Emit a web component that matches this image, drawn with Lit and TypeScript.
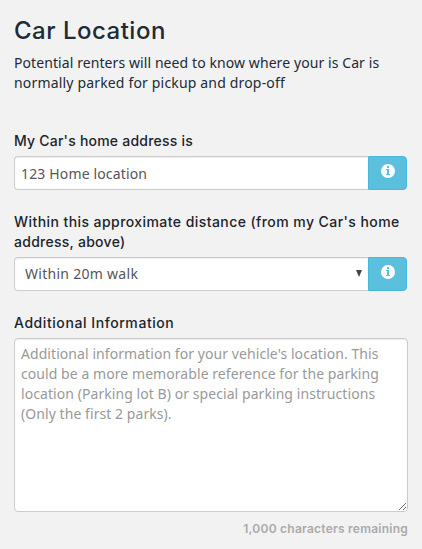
import { LitElement, html, css } from "lit";
import { customElement, state } from "lit/decorators.js";

@customElement("info-button")
class InfoButton extends LitElement {
  static styles = css`
    :host { display: block; flex: none; width: 39px; height: 34px; }
    button {
      display: flex; box-sizing: border-box; width: 100%; height: 100%;
      justify-content: center; align-items: flex-start; padding: 7px 0 0;
      border: 1px solid #46b8da; border-radius: 0 4px 4px 0;
      background: #5bc0de; cursor: pointer;
    }
    svg { display: block; }
  `;
  render() {
    return html`<button type="button" aria-label="More information">
      <svg width="14" height="14" viewBox="0 0 14 14">
        <circle cx="7" cy="7" r="7" fill="#fff"></circle>
        <path d="M6 2h2v2H6zM5 5h3v5h1v1H5v-1h1V6H5z" fill="#5bc0de"></path>
      </svg>
    </button>`;
  }
}

@customElement("app-root")
class AppRoot extends LitElement {
  @state() private remaining = "1,000";

  static styles = css`
    :host {
      display: flex; flex-direction: column; box-sizing: border-box;
      width: 422px; height: 549px; padding: 17px 14px 0; overflow: hidden;
      background: #f2f2f2; color: #212b35;
      font: 14px/20px "Noto Sans", sans-serif;
    }
    .line { display: block; white-space: nowrap; }
    h1 { margin: 0; font: 450 24px/28px Inter, sans-serif; letter-spacing: 0.5px; }
    .intro { margin: 8px 0 0; height: 40px; }
    .i1 { letter-spacing: 0.085px; }
    .i2 { letter-spacing: 0.17px; }
    label { display: block; font: 450 14px/20px Inter, sans-serif; color: #1c242c; }
    .l1 { letter-spacing: 0.22px; }
    .l2 { letter-spacing: 0.43px; }
    .l3 { letter-spacing: 0.27px; }
    .l4 { letter-spacing: 0.57px; }
    .address { margin-top: 38px; }
    .distance { margin-top: 22px; }
    .extra { margin-top: 22px; }
    .group { display: flex; width: 393px; height: 34px; margin-top: 5px; }
    .box {
      box-sizing: border-box; margin: 0; border: 1px solid #ccc; background: #fff;
      color: #555; font: 14px/20px "Noto Sans", sans-serif; outline: none;
      box-shadow: inset 0 1px 1px rgba(0, 0, 0, 0.075);
    }
    .field { flex: 1; min-width: 0; height: 34px; padding: 0 6px; border-right: 0; border-radius: 4px 0 0 4px; letter-spacing: 0.15px; }
    .pick { position: relative; flex: 1; display: flex; }
    select.field { appearance: none; padding: 0 10px; letter-spacing: 0.28px; }
    .caret { position: absolute; right: 6px; top: 13px; width: 6px; height: 7px; pointer-events: none; }
    .caret svg { display: block; }
    textarea.box {
      display: block; width: 394px; height: 174px; margin-top: 5px; padding: 5px 6px;
      border-radius: 4px; resize: both; overflow: hidden; letter-spacing: 0.065px;
    }
    textarea::placeholder { color: #999; opacity: 1; }
    .count { margin-top: 7px; text-align: right; color: #aaa; font: 600 12px/20px Inter, sans-serif; letter-spacing: 0.24px; white-space: nowrap; }
  `;

  render() {
    return html`
      <h1>Car Location</h1>
      <p class="intro">
        <span class="line i1">Potential renters will need to know where your is Car is</span>
        <span class="line i2">normally parked for pickup and drop-off</span>
      </p>
      <label class="address" for="address"><span class="line l1">My Car's home address is</span></label>
      <div class="group">
        <input id="address" class="box field" value="123 Home location" />
        <info-button></info-button>
      </div>
      <label class="distance" for="distance">
        <span class="line l2">Within this approximate distance (from my Car's home</span>
        <span class="line l3">address, above)</span>
      </label>
      <div class="group">
        <div class="pick">
          <select id="distance" class="box field"><option>Within 20m walk</option></select>
          <span class="caret"><svg width="6" height="7" viewBox="0 0 6 7"><path d="M0 0h6L3 7z" fill="#444"></path></svg></span>
        </div>
        <info-button></info-button>
      </div>
      <label class="extra" for="extra"><span class="line l4">Additional Information</span></label>
      <textarea id="extra" class="box"
        placeholder=${"Additional information for your vehicle's location. This\ncould be a more memorable reference for the parking\nlocation (Parking lot B) or special parking instructions\n(Only the first 2 parks)."}></textarea>
      <div class="count">${this.remaining} characters remaining</div>
    `;
  }
}
